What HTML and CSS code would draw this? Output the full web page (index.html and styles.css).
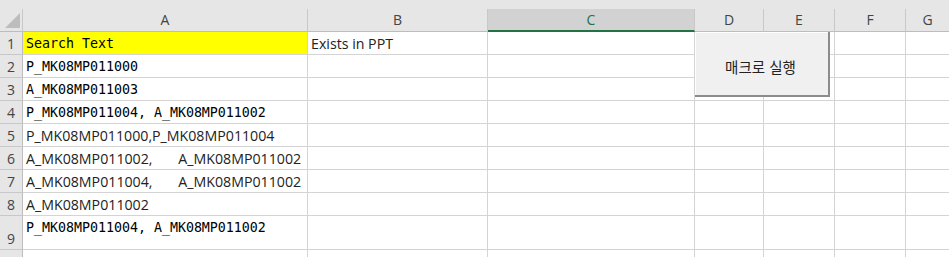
FILE: index.html
```html
<!DOCTYPE html>
<html lang="ko">
<head>
<meta charset="utf-8">
<title>Sheet</title>
<link rel="stylesheet" href="styles.css">
</head>
<body>
<div class="sheet">
  <div class="topstrip"></div>
  <div class="grid">
    <div class="hd corner"><svg class="tri" width="15" height="15" viewBox="0 0 15 15"><polygon points="15,0 15,15 0,15" fill="#bdbdbd"/></svg></div>
    <div class="hd col">A</div>
    <div class="hd col">B</div>
    <div class="hd col sel">C</div>
    <div class="hd col">D</div>
    <div class="hd col">E</div>
    <div class="hd col">F</div>
    <div class="hd col last">G</div>

    <div class="rn">1</div>
    <div class="c mono yellow">Search Text</div>
    <div class="c prop">Exists in PPT</div>
    <div class="c"></div><div class="c"></div><div class="c"></div><div class="c"></div><div class="c last"></div>

    <div class="rn">2</div>
    <div class="c mono">P_MK08MP011000</div>
    <div class="c"></div><div class="c"></div><div class="c"></div><div class="c"></div><div class="c"></div><div class="c last"></div>

    <div class="rn">3</div>
    <div class="c mono">A_MK08MP011003</div>
    <div class="c"></div><div class="c"></div><div class="c"></div><div class="c"></div><div class="c"></div><div class="c last"></div>

    <div class="rn">4</div>
    <div class="c mono">P_MK08MP011004, A_MK08MP011002</div>
    <div class="c"></div><div class="c"></div><div class="c"></div><div class="c"></div><div class="c"></div><div class="c last"></div>

    <div class="rn">5</div>
    <div class="c prop">P_MK08MP011000,P_MK08MP011004</div>
    <div class="c"></div><div class="c"></div><div class="c"></div><div class="c"></div><div class="c"></div><div class="c last"></div>

    <div class="rn">6</div>
    <div class="c prop">A_MK08MP011002,       A_MK08MP011002</div>
    <div class="c"></div><div class="c"></div><div class="c"></div><div class="c"></div><div class="c"></div><div class="c last"></div>

    <div class="rn">7</div>
    <div class="c prop">A_MK08MP011004,       A_MK08MP011002</div>
    <div class="c"></div><div class="c"></div><div class="c"></div><div class="c"></div><div class="c"></div><div class="c last"></div>

    <div class="rn">8</div>
    <div class="c prop">A_MK08MP011002</div>
    <div class="c"></div><div class="c"></div><div class="c"></div><div class="c"></div><div class="c"></div><div class="c last"></div>

    <div class="rn">9</div>
    <div class="c mono top">P_MK08MP011004, A_MK08MP011002</div>
    <div class="c"></div><div class="c"></div><div class="c"></div><div class="c"></div><div class="c"></div><div class="c last"></div>

    <div class="rn"></div>
    <div class="c"></div><div class="c"></div><div class="c"></div><div class="c"></div><div class="c"></div><div class="c"></div><div class="c last"></div>
  </div>
  <button class="macro" type="button">매크로 실행</button>
</div>
</body>
</html>
```
FILE: styles.css
```css
* { box-sizing: border-box; }
html, body { margin: 0; padding: 0; background: #ffffff; overflow: hidden; }
body { width: 949px; height: 257px; }

.sheet {
  position: relative;
  width: 949px;
  height: 257px;
  overflow: hidden;
  font-family: "Open Sans", "Noto Sans CJK KR", sans-serif;
}

.topstrip { height: 9px; background: #e6e6e6; }

.grid {
  display: grid;
  grid-template-columns: 23px 285px 180px 207px 69px 71px 71px 1fr;
  grid-template-rows: 23px repeat(8, 23px) 34px 23px;
}

.hd {
  background: #e6e6e6;
  border-right: 1px solid #c8c8c8;
  border-bottom: 1px solid #bdbdbd;
  color: #444444;
  font-size: 14px;
  display: flex;
  align-items: center;
  justify-content: center;
  padding-bottom: 1px;
}
.hd.corner { justify-content: flex-end; align-items: flex-end; padding: 0 2px 3px 0; }
.tri { display: block; }
.hd.sel { background: #d2d2d2; color: #217346; border-bottom: 2px solid #217346; }
.hd.last { border-right: none; }

.rn {
  background: #e6e6e6;
  border-right: 1px solid #bdbdbd;
  border-bottom: 1px solid #c8c8c8;
  color: #444444;
  font-size: 14px;
  display: flex;
  align-items: flex-end;
  justify-content: center;
  padding-bottom: 1px;
}

.c {
  border-right: 1px solid #d4d4d4;
  border-bottom: 1px solid #d4d4d4;
  display: flex;
  align-items: flex-end;
  padding: 0 3px 2px 3px;
  white-space: pre;
  overflow: visible;
  color: #000000;
}
.c.last { border-right: none; }
.c.top { align-items: flex-start; padding-top: 4px; }

.mono {
  font-family: "DejaVu Sans Mono", "Liberation Mono", monospace;
  font-size: 13.33px;
  line-height: 16px;
  padding-bottom: 2px;
  letter-spacing: -0.03px;
}
.prop {
  font-family: "Open Sans", "Noto Sans CJK KR", sans-serif;
  font-size: 14.2px;
  line-height: 18px;
  color: #222222;
  padding-bottom: 1px;
}
.yellow { background: #ffff00; }

.macro {
  position: absolute;
  left: 695px;
  top: 32px;
  width: 135px;
  height: 65px;
  margin: 0;
  padding: 6px 2px 0 0;
  background: #f0f0f0;
  border: none;
  border-right: 2px solid #8c8c8c;
  border-bottom: 2px solid #8c8c8c;
  box-shadow: inset 1px 1px 0 #ffffff;
  font-family: "Noto Sans CJK KR", sans-serif;
  font-size: 14.5px;
  color: #222222;
}
```
